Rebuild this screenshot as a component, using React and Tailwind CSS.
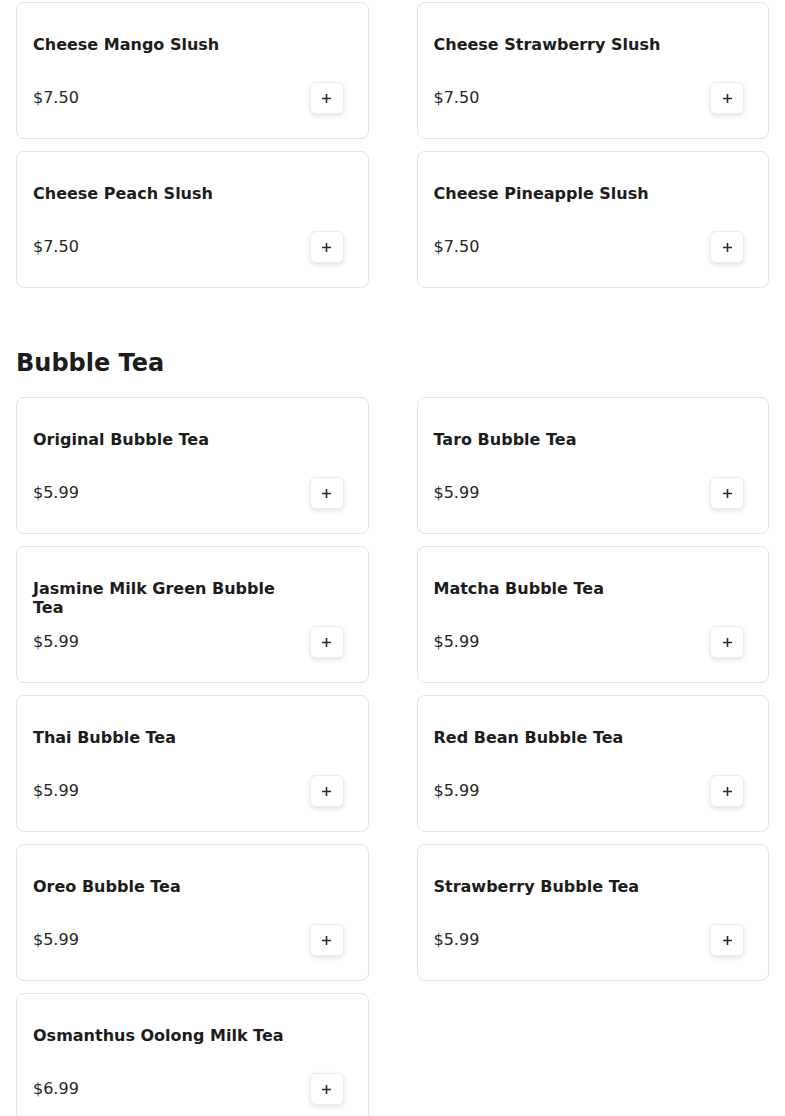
import React from 'react';

const slushes = [
  { name: 'Cheese Mango Slush', price: 7.5 },
  { name: 'Cheese Strawberry Slush', price: 7.5 },
  { name: 'Cheese Peach Slush', price: 7.5 },
  { name: 'Cheese Pineapple Slush', price: 7.5 },
];

const bubbleTeas = [
  { name: 'Original Bubble Tea', price: 5.99 },
  { name: 'Taro Bubble Tea', price: 5.99 },
  { name: 'Jasmine Milk Green Bubble Tea', price: 5.99 },
  { name: 'Matcha Bubble Tea', price: 5.99 },
  { name: 'Thai Bubble Tea', price: 5.99 },
  { name: 'Red Bean Bubble Tea', price: 5.99 },
  { name: 'Oreo Bubble Tea', price: 5.99 },
  { name: 'Strawberry Bubble Tea', price: 5.99 },
  { name: 'Osmanthus Oolong Milk Tea', price: 6.99 },
];

const MenuCard = ({ item }) => (
  <div className="h-[137px] rounded-lg border border-[#e3e3e3] bg-white pl-4 pr-6 pt-[32px]">
    <h3 className="h-[38px] pr-[48px] text-base font-bold leading-[19px] text-[#1c1c1c]">{item.name}</h3>
    <div className="mt-[9px] flex items-center justify-between">
      <span className="text-base text-[#262626]">${item.price.toFixed(2)}</span>
      <button className="flex h-[32px] w-[34px] items-center justify-center rounded-md border border-[#ececec] bg-white shadow-[0_2px_5px_rgba(0,0,0,0.12)]">
        <svg width="9" height="9" viewBox="0 0 9 9">
          <path d="M4.5 0v9M0 4.5h9" stroke="#2a2a2a" strokeWidth="1.6" />
        </svg>
      </button>
    </div>
  </div>
);

const App = () => {
  return (
    <div className="min-h-screen bg-white px-4 pt-[2px] font-['DejaVu_Sans',sans-serif] text-[#1c1c1c]">
      <div className="grid grid-cols-2 gap-x-12 gap-y-3">
        {slushes.map(item => <MenuCard key={item.name} item={item} />)}
      </div>

      <h2 className="mb-[18px] mt-[59px] text-2xl font-bold leading-8 text-[#1c1c1c]">Bubble Tea</h2>
      <div className="grid grid-cols-2 gap-x-12 gap-y-3">
        {bubbleTeas.map(item => <MenuCard key={item.name} item={item} />)}
      </div>
    </div>
  );
};

export default App;
